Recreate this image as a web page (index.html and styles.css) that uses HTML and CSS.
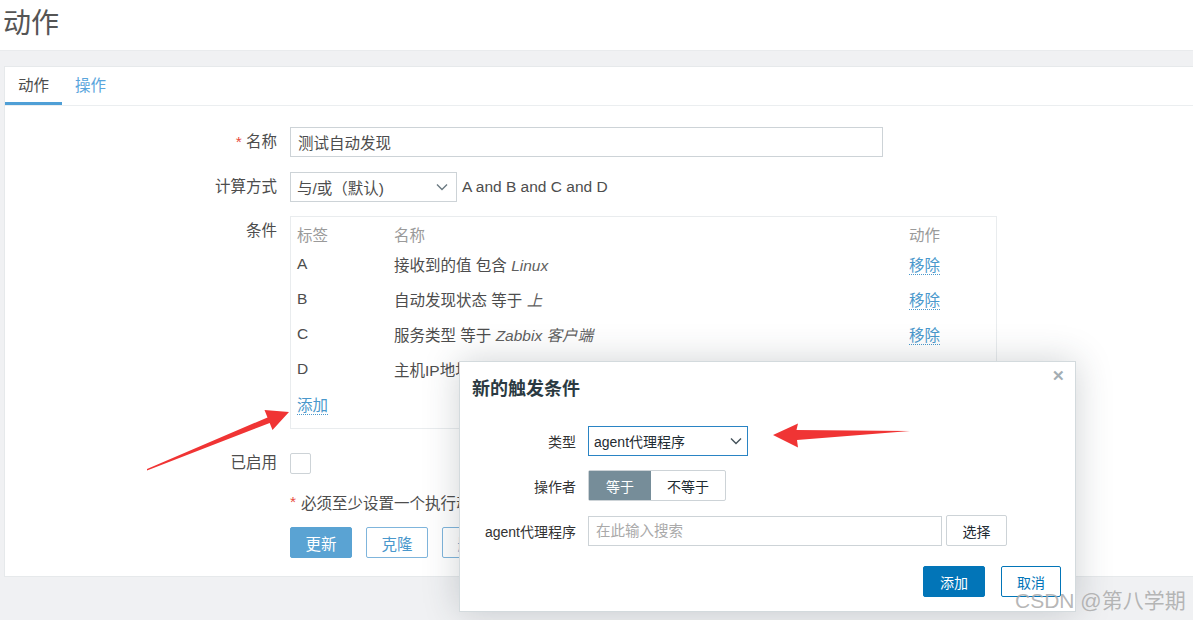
FILE: index.html
```html
<!DOCTYPE html>
<html lang="zh-CN">
<head>
  <meta charset="UTF-8" />
  <title>动作</title>
  <link rel="stylesheet" href="styles.css">
</head>
<body>

<header class="page-header">
  <h1>动作</h1>
</header>

<main class="page-body">
  <section class="panel">
    <nav class="tabs">
      <a class="tab active">动作</a>
      <a class="tab">操作</a>
    </nav>

    <form class="action-form">
      <div class="form-row row-name">
        <label class="form-label"><span class="req">*</span> 名称</label>
        <div class="form-field">
          <input class="text-input name-input" type="text" value="测试自动发现" />
        </div>
      </div>

      <div class="form-row row-calc">
        <label class="form-label">计算方式</label>
        <div class="form-field">
          <div class="select calc-select">
            <span>与/或（默认)</span>
            <svg class="chevron" width="12" height="8" viewBox="0 0 12 8"><path d="M1 1.5l5 5 5-5" fill="none" stroke="#6b7a82" stroke-width="1.4"/></svg>
          </div>
          <span class="formula">A and B and C and D</span>
        </div>
      </div>

      <div class="form-row row-cond">
        <label class="form-label">条件</label>
        <div class="form-field">
          <div class="cond-box">
            <table class="cond-table">
              <tr class="head"><td class="c-tag">标签</td><td class="c-name">名称</td><td class="c-act">动作</td></tr>
              <tr><td>A</td><td>接收到的值 包含 <i>Linux</i></td><td><a class="link">移除</a></td></tr>
              <tr><td>B</td><td>自动发现状态 等于 <i>上</i></td><td><a class="link">移除</a></td></tr>
              <tr><td>C</td><td>服务类型 等于 <i>Zabbix 客户端</i></td><td><a class="link">移除</a></td></tr>
              <tr><td>D</td><td>主机IP地址 等于 <i>192.168.1.1-254</i></td><td><a class="link">移除</a></td></tr>
              <tr><td colspan="3"><a class="link">添加</a></td></tr>
            </table>
          </div>
        </div>
      </div>

      <div class="form-row row-enabled">
        <label class="form-label">已启用</label>
        <div class="form-field">
          <span class="checkbox"></span>
        </div>
      </div>

      <div class="form-row row-note">
        <span class="form-label"></span>
        <div class="form-field note"><span class="req">*</span> 必须至少设置一个执行动作或恢复操作。</div>
      </div>

      <div class="form-row row-buttons">
        <span class="form-label"></span>
        <div class="form-field buttons">
          <button type="button" class="btn btn-main">更新</button>
          <button type="button" class="btn btn-alt">克隆</button>
          <button type="button" class="btn btn-alt">删除</button>
          <button type="button" class="btn btn-alt">取消</button>
        </div>
      </div>
    </form>
  </section>
</main>

<div class="dialog">
  <span class="dialog-close">&#x2715;</span>
  <h3 class="dialog-title">新的触发条件</h3>
  <div class="dlg-row">
    <label class="dlg-label">类型</label>
    <div class="select type-select">
      <span>agent代理程序</span>
      <svg class="chevron" width="12" height="8" viewBox="0 0 12 8"><path d="M1 1.5l5 5 5-5" fill="none" stroke="#44525a" stroke-width="1.4"/></svg>
    </div>
  </div>
  <div class="dlg-row">
    <label class="dlg-label">操作者</label>
    <div class="segmented">
      <span class="seg on">等于</span>
      <span class="seg">不等于</span>
    </div>
  </div>
  <div class="dlg-row">
    <label class="dlg-label">agent代理程序</label>
    <input class="text-input search-input" type="text" placeholder="在此输入搜索" />
    <button type="button" class="btn btn-plain">选择</button>
  </div>
  <div class="dlg-footer">
    <button type="button" class="btn btn-primary">添加</button>
    <button type="button" class="btn btn-outline">取消</button>
  </div>
</div>

<svg class="arrows" width="1193" height="620" viewBox="0 0 1193 620">
  <polygon points="147,469 267.5,417.4 264.5,410 289,412 272.5,430 269.7,423 147,470.5" fill="#f03434"/>
  <polygon points="773,435 798,423.5 796.5,430 910,431 797,440 798,447.5" fill="#f03434"/>
</svg>

<div class="watermark">CSDN @第八学期</div>

</body>
</html>
```

FILE: styles.css
```css
:root {
  --band: #f0f1f3;
  --line: #e6e9eb;
  --text: #4d4d4d;
  --muted: #9a9a9a;
  --link: #4a98cc;
  --field-border: #cdd3d7;
  --dlg-text: #1f2c33;
  --primary: #0275b8;
  --red: #e84c3d;
}

* {
  box-sizing: border-box;
}

body {
  margin: 0;
  width: 1193px;
  height: 620px;
  overflow: hidden;
  position: relative;
  background: var(--band);
  color: var(--text);
  font-family: "Liberation Sans", "Noto Sans CJK SC", sans-serif;
  font-size: 15.5px;
}

.page-header {
  height: 51px;
  background: #fff;
  border-bottom: 1px solid #e9ebed;
}

.page-header h1 {
  margin: 0;
  padding: 6px 0 0 3px;
  font-size: 28px;
  font-weight: normal;
  line-height: 36px;
  color: #555;
}

.page-body {
  padding: 15px 0 0 4px;
}

.panel {
  width: 1200px;
  height: 511px;
  background: #fff;
  border: 1px solid var(--line);
  border-right: none;
}

/* tabs */
.tabs {
  display: flex;
  height: 39px;
  border-bottom: 1px solid #ebeef0;
}

.tab {
  padding: 2px 13px 0;
  line-height: 34px;
  color: #5aa5dc;
  border-bottom: 3px solid transparent;
}

.tab.active {
  color: #4d4d4d;
  border-bottom-color: #4f9fd6;
}

/* main form */
.action-form {
  padding-top: 21px;
}

.form-row {
  display: flex;
}

.form-label {
  width: 272px;
  margin-right: 13px;
  text-align: right;
  line-height: 30px;
  flex-shrink: 0;
}

.form-field {
  display: flex;
  align-items: center;
  gap: 5px;
}

.req {
  color: var(--red);
}

.row-name { margin-bottom: 15px; }
.row-calc { margin-bottom: 14px; }
.row-cond { margin-bottom: 19px; }
.row-enabled { margin-bottom: 12px; }
.row-note { margin-bottom: 13px; }

.row-cond .form-field {
  align-items: flex-start;
}

.text-input {
  height: 30px;
  border: 1px solid var(--field-border);
  padding: 0 7px;
  font: inherit;
  color: var(--text);
  background: #fff;
  outline: none;
}

.name-input {
  width: 593px;
}

.select {
  display: flex;
  align-items: center;
  justify-content: space-between;
  height: 30px;
  border: 1px solid var(--field-border);
  padding: 0 8px 0 6px;
  background: #fff;
}

.calc-select {
  width: 167px;
}

.chevron {
  display: block;
}

.cond-box {
  width: 707px;
  height: 213px;
  border: 1px solid #e9ecee;
  padding: 4px 0 0 6px;
}

.cond-table {
  border-collapse: collapse;
  width: 100%;
}

.cond-table td {
  padding: 0;
  height: 34.8px;
  white-space: nowrap;
}

.cond-table tr.head td {
  height: 26px;
  color: var(--muted);
}

.c-tag { width: 97px; }
.c-name { width: 515px; }

.cond-table i {
  color: #5f5f5f;
}

.link {
  color: var(--link);
  border-bottom: 1px dotted var(--link);
}

.checkbox {
  display: block;
  width: 21px;
  height: 21px;
  margin: 5px 0 4px;
  border: 1px solid #cdd3d7;
  border-radius: 2px;
}

.note {
  height: 24px;
  gap: 0;
}

.note .req {
  margin-right: 5px;
}

.buttons {
  gap: 14px;
}

.btn {
  height: 31px;
  padding: 0 14px;
  font: inherit;
  border-radius: 2px;
  cursor: pointer;
}

.btn-main {
  width: 62px;
  background: #5aa3d3;
  border: 1px solid #5aa3d3;
  color: #fff;
}

.btn-alt {
  width: 62px;
  background: #fff;
  border: 1px solid #7fb5dc;
  color: #4a98cc;
}

/* dialog */
.dialog {
  position: absolute;
  left: 459px;
  top: 361px;
  width: 617px;
  height: 251px;
  background: #fff;
  border: 1px solid #d3dadd;
  box-shadow: 0 0 34px rgba(40, 55, 65, 0.22);
  padding: 14px 14px 0 12px;
  font-size: 14px;
  color: var(--dlg-text);
}

.dialog-close {
  position: absolute;
  right: 10px;
  top: 5px;
  font-size: 15px;
  font-weight: bold;
  color: #a3adb3;
}

.dialog-title {
  margin: 0 0 24px;
  font-size: 18px;
  line-height: 26px;
  font-weight: bold;
  color: #2b3a42;
}

.dlg-row {
  display: flex;
  align-items: center;
  margin-bottom: 14px;
}

.dlg-label {
  width: 104px;
  margin-right: 12px;
  text-align: right;
  white-space: nowrap;
  color: #333;
}

.type-select {
  width: 160px;
  border-color: #2a84c4;
  padding: 0 5px 0 5px;
}

.segmented {
  display: flex;
  height: 31px;
  border: 1px solid var(--field-border);
  border-radius: 2px;
}

.seg {
  display: flex;
  align-items: center;
  justify-content: center;
  width: 74px;
  color: #1f2c33;
}

.seg.on {
  width: 62px;
  background: #768d99;
  color: #fff;
}

.search-input {
  width: 354px;
  font-size: 14.5px;
  margin-right: 4px;
}

.search-input::placeholder {
  color: #a9a9a9;
}

.btn-plain {
  width: 61px;
  height: 31px;
  padding: 0;
  background: #fff;
  border: 1px solid var(--field-border);
  color: #1f2c33;
}

.dlg-footer {
  display: flex;
  justify-content: flex-end;
  gap: 16px;
  margin-top: 20px;
}

.btn-primary {
  width: 62px;
  padding: 0;
  background: var(--primary);
  border: 1px solid var(--primary);
  color: #fff;
}

.btn-outline {
  width: 60px;
  padding: 0;
  background: #fff;
  border: 1px solid var(--primary);
  color: var(--primary);
}

.arrows {
  position: absolute;
  left: 0;
  top: 0;
  pointer-events: none;
}

.watermark {
  position: absolute;
  left: 1015px;
  top: 587px;
  font-size: 21px;
  line-height: 28px;
  color: rgba(170, 170, 170, 0.85);
}
```
